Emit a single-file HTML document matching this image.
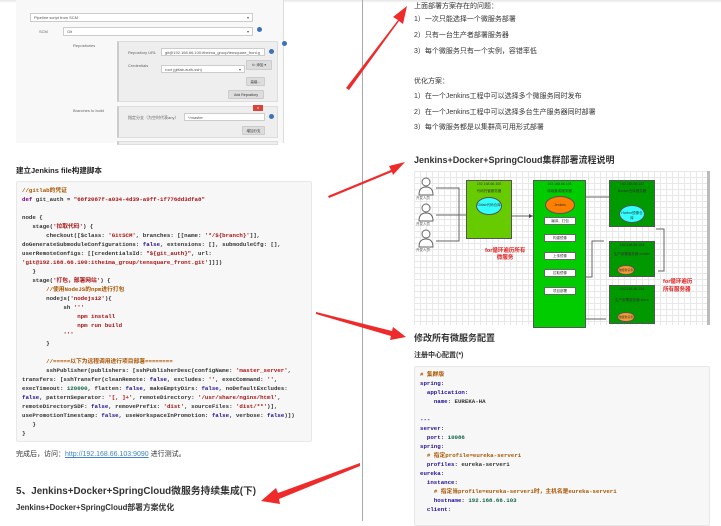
<!DOCTYPE html>
<html><head><meta charset="utf-8"><style>
*{margin:0;padding:0;box-sizing:border-box}
body{width:721px;height:521px;overflow:hidden;background:#fff;position:relative;font-family:"Liberation Sans","Noto Sans CJK SC",sans-serif;color:#333}
.a{position:absolute;white-space:nowrap}
.t{font-size:7px;line-height:9px}
.code{position:absolute;background:#f7f7f7;border:1px solid #e8e8e8;border-radius:2px;font-family:"Liberation Mono","Noto Sans CJK SC",monospace;font-size:5.75px;line-height:9px;font-weight:bold;color:#333;white-space:pre;padding:4px 0 0 5px;overflow:hidden}
.k{color:#770088}.s{color:#aa1111}.c{color:#aa5500}.n{color:#116644}.b{color:#221199}.d{color:#0000ff}
.inp{position:absolute;background:#fff;border:1px solid #ccc;font-size:4px;line-height:7px;padding-left:3px;color:#555}
.btn{position:absolute;background:#ddd;border:1px solid #ccc;border-radius:1px;font-size:3.5px;line-height:8px;text-align:center;color:#333}
.lbl{position:absolute;font-size:4px;color:#666;white-space:nowrap}
.hlp{position:absolute;width:5px;height:5px;border-radius:50%;background:#3b73b9}
.pnl{position:absolute;background:#eee;border:1px solid #ddd;border-left:2px solid #ccc}
.bx{position:absolute;border:1px solid #555}
.st{position:absolute;background:#fff;border:1px solid #666;font-size:3.5px;line-height:6px;text-align:center;left:544px;width:32px;height:8px}
.bt{font-size:3.5px;color:#333;text-align:center;position:absolute;width:100%;white-space:nowrap}
</style></head><body>
<div class="a" style="left:0;top:0;width:721px;height:3px;background:linear-gradient(#e6e6e6,#fff)"></div>
<div class="a" style="left:16px;top:0;width:268px;height:143px;background:#f8f8f8;border-right:1px solid #ddd"></div>
<div class="inp" style="left:30px;top:13px;width:223px;height:9px">Pipeline script from SCM<span style="position:absolute;right:3px">▾</span></div>
<div class="lbl" style="left:39px;top:29px">SCM</div>
<div class="inp" style="left:63px;top:27px;width:190px;height:9px">Git<span style="position:absolute;right:3px">▾</span></div>
<div class="hlp" style="left:257px;top:27px"></div>
<div class="lbl" style="left:73px;top:43px">Repositories</div>
<div class="pnl" style="left:117px;top:41px;width:161px;height:61px"></div>
<div class="hlp" style="left:282px;top:41px"></div>
<div class="lbl" style="left:128px;top:50px">Repository URL</div>
<div class="inp" style="left:161px;top:48px;width:104px;height:8px">git@192.168.66.100:itheima_group/tensquare_front.g</div>
<div class="hlp" style="left:269px;top:49px"></div>
<div class="lbl" style="left:128px;top:63px">Credentials</div>
<div class="inp" style="left:161px;top:65px;width:84px;height:8px">root (gitlab-auth-ssh)<span style="position:absolute;right:3px">▾</span></div>
<div class="btn" style="left:246px;top:60px;width:26px;height:10px">⇐ 添加 ▾</div>
<div class="btn" style="left:246px;top:77px;width:19px;height:9px">高级...</div>
<div class="btn" style="left:228px;top:90px;width:36px;height:9px">Add Repository</div>
<div class="lbl" style="left:73px;top:108px">Branches to build</div>
<div class="pnl" style="left:117px;top:106px;width:161px;height:32px"></div>
<div class="a" style="left:253px;top:105px;width:10px;height:6px;background:#d9433a;color:#fff;font-size:4px;line-height:6px;text-align:center">x</div>
<div class="lbl" style="left:128px;top:115px">指定分支（为空时代表any）</div>
<div class="inp" style="left:184px;top:113px;width:81px;height:8px">*/master</div>
<div class="hlp" style="left:269px;top:114px"></div>
<div class="btn" style="left:242px;top:126px;width:23px;height:9px">增加分支</div>
<div class="pnl" style="left:117px;top:141px;width:161px;height:4px"></div>

<div class="a" style="left:16px;top:165px;font-size:7.5px;font-weight:bold;color:#222">建立Jenkins file构建脚本</div>
<div class="code" style="left:16px;top:181px;width:296px;height:261px"><span class="c">//gitlab的凭证</span>
<span class="k">def</span> git_auth = <span class="s">"68f2087f-a034-4d39-a9ff-1f776dd3dfa8"</span>

node {
   stage(<span class="s">'拉取代码'</span>) {
       checkout([$class: <span class="s">'GitSCM'</span>, branches: [[name: <span class="s">'*/${branch}'</span>]],
doGenerateSubmoduleConfigurations: <span class="b">false</span>, extensions: [], submoduleCfg: [],
userRemoteConfigs: [[credentialsId: <span class="s">"${git_auth}"</span>, url:
<span class="s">'git@192.168.66.100:itheima_group/tensquare_front.git'</span>]]])
   }
   stage(<span class="s">'打包，部署网站'</span>) {
       <span class="c">//使用NodeJS的npm进行打包</span>
       nodejs(<span class="s">'nodejs12'</span>){
            sh <span class="s">'''</span>
<span class="s">                npm install</span>
<span class="s">                npm run build</span>
<span class="s">            '''</span>
       }

       <span class="c">//=====以下为远程调用进行项目部署========</span>
       sshPublisher(publishers: [sshPublisherDesc(configName: <span class="s">'master_server'</span>,
transfers: [sshTransfer(cleanRemote: <span class="b">false</span>, excludes: <span class="s">''</span>, execCommand: <span class="s">''</span>,
execTimeout: <span class="n">120000</span>, flatten: <span class="b">false</span>, makeEmptyDirs: <span class="b">false</span>, noDefaultExcludes:
<span class="b">false</span>, patternSeparator: <span class="s">'[, ]+'</span>, remoteDirectory: <span class="s">'/usr/share/nginx/html'</span>,
remoteDirectorySDF: <span class="b">false</span>, removePrefix: <span class="s">'dist'</span>, sourceFiles: <span class="s">'dist/**'</span>)],
usePromotionTimestamp: <span class="b">false</span>, useWorkspaceInPromotion: <span class="b">false</span>, verbose: <span class="b">false</span>)])
   }
}</div>
<div class="a t" style="left:16px;top:450px">完成后，访问：<span style="color:#4183c4;text-decoration:underline">http://192.168.66.103:9090</span> 进行测试。</div>
<div class="a" style="left:16px;top:483px;font-size:9.8px;font-weight:bold;color:#333">5、Jenkins+Docker+SpringCloud微服务持续集成(下)</div>
<div class="a" style="left:16px;top:502px;font-size:7.8px;font-weight:bold;color:#333">Jenkins+Docker+SpringCloud部署方案优化</div>

<div class="a" style="left:362px;top:0;width:1px;height:521px;background:#aaa"></div>

<div class="a t" style="left:414px;top:2px">上面部署方案存在的问题：</div>
<div class="a t" style="left:414px;top:15px">1）一次只能选择一个微服务部署</div>
<div class="a t" style="left:414px;top:31px">2）只有一台生产者部署服务器</div>
<div class="a t" style="left:414px;top:47px">3）每个微服务只有一个实例，容错率低</div>
<div class="a t" style="left:414px;top:77px">优化方案：</div>
<div class="a t" style="left:414px;top:92px">1）在一个Jenkins工程中可以选择多个微服务同时发布</div>
<div class="a t" style="left:414px;top:108px">2）在一个Jenkins工程中可以选择多台生产服务器同时部署</div>
<div class="a t" style="left:414px;top:123px">3）每个微服务都是以集群高可用形式部署</div>
<div class="a" style="left:414px;top:153px;font-size:9px;font-weight:bold">Jenkins+Docker+SpringCloud集群部署流程说明</div>

<div class="a" style="left:414px;top:171px;width:296px;height:154px;background-color:#fff;background-image:linear-gradient(#e8e8e8 1px,transparent 1px),linear-gradient(90deg,#e8e8e8 1px,transparent 1px);background-size:6px 6px;border-right:3px solid #bbb"></div>
<svg class="a" style="left:414px;top:171px" width="296" height="154">
<g fill="#fff" stroke="#666" stroke-width="1">
<circle cx="12" cy="11" r="4"/><path d="M5 24 q0-8 7-8 q7 0 7 8z"/>
<circle cx="12" cy="37" r="4"/><path d="M5 50 q0-8 7-8 q7 0 7 8z"/>
<circle cx="12" cy="63" r="4"/><path d="M5 76 q0-8 7-8 q7 0 7 8z"/>
</g>
<g fill="none" stroke="#666" stroke-width="1">
<path d="M22 17 H45 V44 H62 M22 44 H62 M22 70 H45 V44"/>
<path d="M96 45 H119 M160 56 V118"/>
<path d="M158 106 H178 V70 H190"/>
<path d="M158 99 H170 V26 H198"/>
<path d="M158 120 H165 V148 H192"/>
<path d="M242 58 H250 V100 H244"/>
</g>
<g fill="#444"><path d="M62 44 l-4 -2 v4z"/><path d="M119 45 l-4 -2 v4z"/></g>
</svg>
<div class="a" style="left:416px;top:196px;font-size:3.5px;color:#555">开发人员</div>
<div class="a" style="left:416px;top:222px;font-size:3.5px;color:#555">开发人员</div>
<div class="a" style="left:416px;top:248px;font-size:3.5px;color:#555">开发人员</div>
<div class="bx" style="left:466px;top:180px;width:46px;height:59px;background:#66cc00">
<div class="bt" style="top:1px">192.168.66.100</div><div class="bt" style="top:8px">代码托管服务器</div>
<div style="position:absolute;left:9px;top:16px;width:26px;height:18px;border-radius:50%;background:#33ffff;border:1px solid #555;font-size:3.5px;text-align:center;padding-top:5px">Gitlab代码仓库</div></div>
<div class="bx" style="left:533px;top:180px;width:53px;height:148px;background:#00cc00">
<div class="bt" style="top:1px">192.168.66.101</div><div class="bt" style="top:8px">持续集成服务器</div>
<div style="position:absolute;left:11px;top:15px;width:30px;height:18px;border-radius:50%;background:#ff7f00;border:1px solid #555;font-size:3.5px;text-align:center;padding-top:6px">Jenkins</div></div>
<div class="st" style="top:217px">编译、打包</div>
<div class="st" style="top:234px">构建镜像</div>
<div class="st" style="top:252px">上传镜像</div>
<div class="st" style="top:269px">拉取镜像</div>
<div class="st" style="top:287px">项目部署</div>
<div class="bx" style="left:609px;top:180px;width:46px;height:47px;background:#009900">
<div class="bt" style="top:1px">192.168.66.102</div><div class="bt" style="top:8px">Docker仓库服务器</div>
<div style="position:absolute;left:9px;top:24px;width:26px;height:18px;border-radius:50%;background:#33ffff;border:1px solid #555;font-size:3.5px;text-align:center;padding-top:5px">Harbor镜像仓库</div></div>
<div class="bx" style="left:609px;top:241px;width:46px;height:36px;background:#009900">
<div class="bt" style="top:1px">192.168.66.103</div><div class="bt" style="top:10px">生产部署服务器 master</div>
<div style="position:absolute;left:7px;top:23px;width:18px;height:10px;border-radius:50%;background:#f39c33;border:1px solid #555;font-size:3px;text-align:center;padding-top:2px">微服务实例</div></div>
<div class="bx" style="left:609px;top:285px;width:46px;height:39px;background:#009900">
<div class="bt" style="top:1px">192.168.66.104</div><div class="bt" style="top:12px">生产部署服务器 slave</div>
<div style="position:absolute;left:7px;top:26px;width:18px;height:10px;border-radius:50%;background:#f39c33;border:1px solid #555;font-size:3px;text-align:center;padding-top:2px">微服务实例</div></div>
<div class="a" style="left:485px;top:248px;font-size:5.5px;line-height:7px;font-weight:bold;color:#e02020;text-align:center">for循环遍历所有<br>微服务</div>
<div class="a" style="left:663px;top:278px;font-size:5.5px;line-height:8px;font-weight:bold;color:#e02020">for循环遍历<br>所有服务器</div>

<div class="a" style="left:414px;top:331px;font-size:9px;font-weight:bold">修改所有微服务配置</div>
<div class="a" style="left:414px;top:350px;font-size:7px;font-weight:bold">注册中心配置(*)</div>
<div class="code" style="left:414px;top:366px;width:296px;height:160px;padding-top:3px"><span class="c"># 集群版</span>
<span class="b">spring</span>:
  <span class="b">application</span>:
    <span class="b">name</span>: EUREKA-HA

<span class="b">---</span>
<span class="b">server</span>:
  <span class="b">port</span>: <span class="n">10086</span>
<span class="b">spring</span>:
  <span class="c"># 指定profile=eureka-server1</span>
  <span class="b">profiles</span>: eureka-server1
<span class="b">eureka</span>:
  <span class="b">instance</span>:
    <span class="c"># 指定当profile=eureka-server1时，主机名是eureka-server1</span>
    <span class="b">hostname</span>: <span class="n">192.168.66.103</span>
  <span class="b">client</span>:</div>

<svg class="a" style="left:0;top:0" width="721" height="521">
<g fill="#ee2a2a">
<path d="M346 88 L398 20 L393 17 L407 6 L403 24 L399 21 L349 90Z"/>
<path d="M328 196 L391 170 L389 166 L405 162 L393 175 L392 172 L329 198Z"/>
<path d="M316 312 L392 331 L393 327 L406 337 L390 340 L391 336 L316 314Z"/>
<path d="M360 463 L278 493 L276 488 L261 501 L280 504 L279 499 L360 466Z"/>
</g>
</svg>
</body></html>
